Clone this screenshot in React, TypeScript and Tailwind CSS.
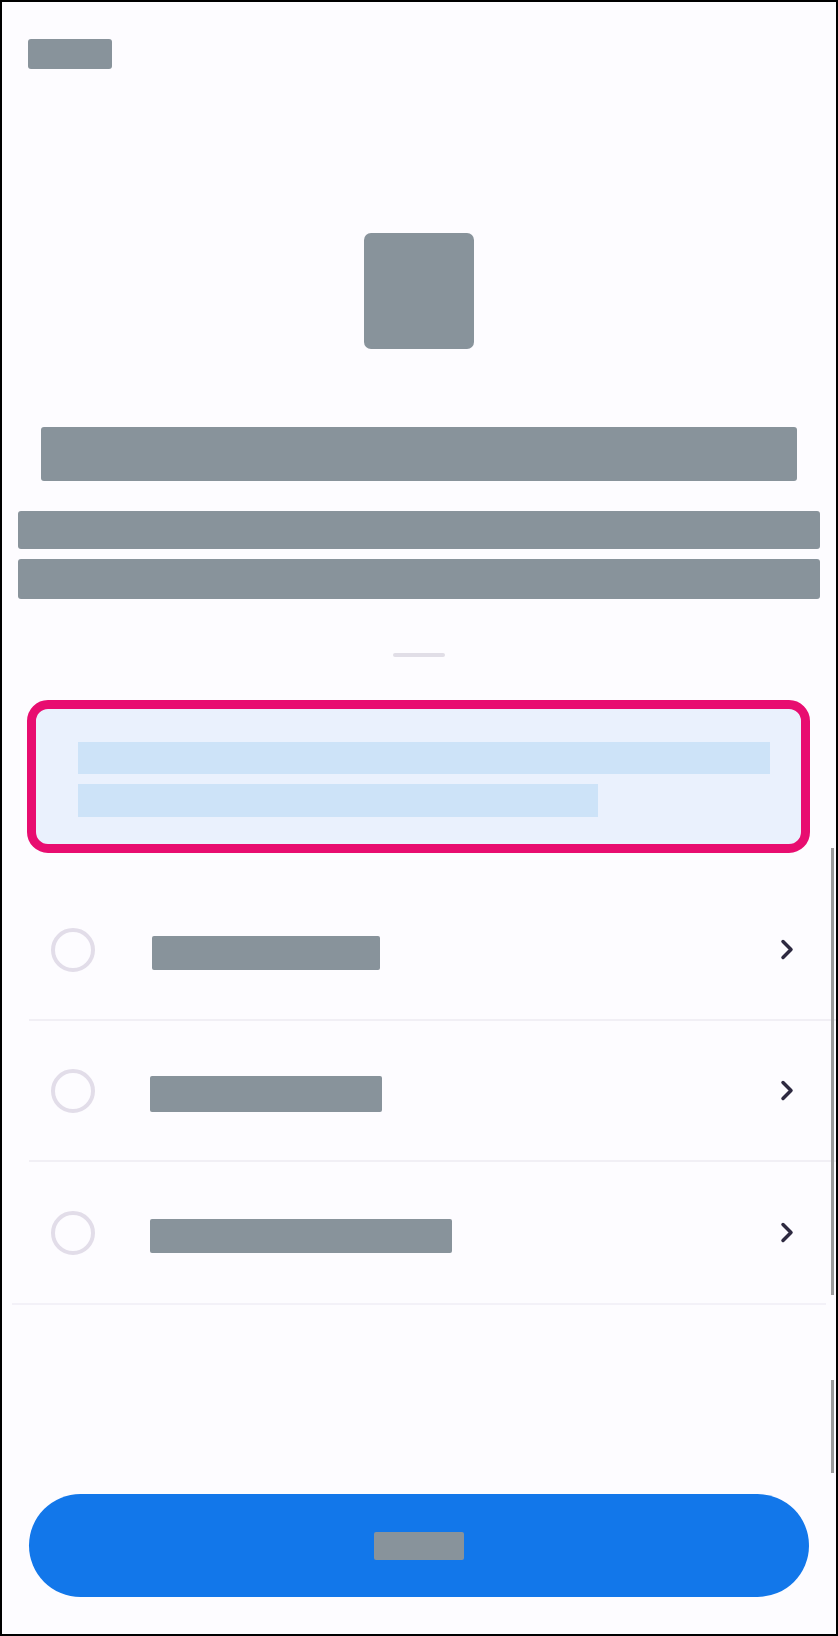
const rows = [
  { label: 228, h: 34, ml: "ml-[57px]" },
  { label: 232, h: 36, ml: "ml-[55px]" },
  { label: 302, h: 34, ml: "ml-[55px]" },
];

const Block = ({ className }: { className: string }) => (
  <div className={"bg-[#88939b] " + className} />
);

const Chevron = () => (
  <svg width="14" height="23" viewBox="0 0 14 23" fill="none">
    <path
      d="M3 3.5 L11 11.5 L3 19.5"
      stroke="#2d2940"
      strokeWidth="3.5"
      strokeLinecap="round"
      strokeLinejoin="round"
    />
  </svg>
);

export default function App() {
  return (
    <div className="relative w-[838px] h-[1636px] border-2 border-black bg-[#fdfcff] flex flex-col overflow-hidden font-['Roboto',sans-serif]">
      {/* top bar */}
      <div className="pt-[37px] pl-[26px]">
        <Block className="w-[84px] h-[30px] rounded-[3px]" />
      </div>

      {/* hero */}
      <Block className="mt-[164px] mx-auto w-[110px] h-[116px] rounded-[7px]" />
      <Block className="mt-[78px] mx-auto w-[756px] h-[54px] rounded-[3px]" />
      <div className="mt-[30px] flex flex-col gap-[10px] items-center">
        <Block className="w-[802px] h-[38px] rounded-[3px]" />
        <Block className="w-[802px] h-[40px] rounded-[3px]" />
      </div>

      <div className="mt-[54px] mx-auto w-[52px] h-[4px] rounded-full bg-[#e1dee7]" />

      {/* highlighted card */}
      <div className="mt-[43px] ml-[25px] w-[783px] border-[9px] border-[#e80d70] rounded-[21px] bg-[#eaf1fd] pl-[42px] pt-[33px] pb-[27px] flex flex-col gap-[10px]">
        <div className="w-[692px] h-[32px] bg-[#cde3f8]" />
        <div className="w-[520px] h-[33px] bg-[#cde3f8]" />
      </div>

      {/* options */}
      <div className="mt-[27px] ml-[27px] flex flex-col">
        {rows.map((r, i) => (
          <div
            key={i}
            className={
              "h-[141px] flex items-center pl-[22px] pr-[42px] " +
              (i < 2 ? "border-b-2 border-[#f1eff5]" : "")
            }
          >
            <div className="w-[44px] h-[44px] rounded-full border-[4px] border-[#e2dde9] shrink-0" />
            <div
              className={r.ml + " mt-[7px] bg-[#88939b] rounded-[2px]"}
              style={{ width: r.label, height: r.h }}
            />
            <div className="ml-auto flex items-center">
              <Chevron />
            </div>
          </div>
        ))}
      </div>
      <div className="mx-[10px] h-[2px] bg-[#f3f1f8]" />

      {/* primary button */}
      <button className="mt-auto mb-[37px] ml-[27px] w-[780px] h-[103px] rounded-full bg-[#1277ea] flex items-center justify-center">
        <Block className="w-[90px] h-[28px] rounded-[2px]" />
      </button>

      {/* scroll indicators */}
      <div className="absolute right-[2px] top-[846px] w-[3px] h-[447px] bg-[#9b9b9b]" />
      <div className="absolute right-[2px] top-[1378px] w-[3px] h-[93px] bg-[#9b9b9b]" />
    </div>
  );
}
